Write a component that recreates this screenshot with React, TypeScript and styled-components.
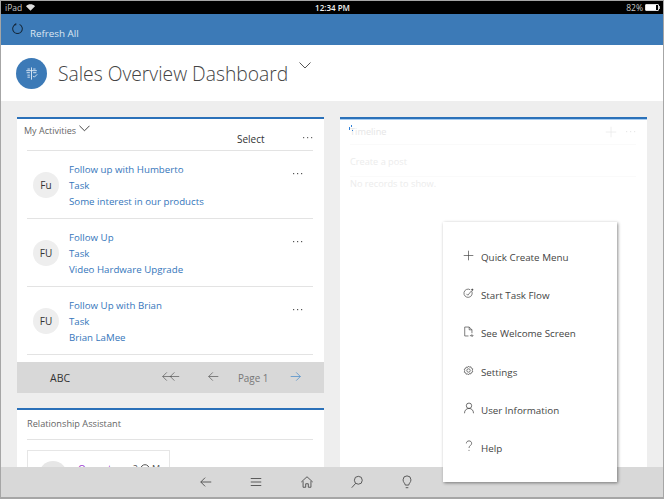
import { ReactNode } from 'react';
import styled, { createGlobalStyle } from 'styled-components';

const GlobalStyle = createGlobalStyle`
  html, body {
    margin: 0;
    padding: 0;
    background: #fff;
  }
  body {
    font-family: "Open Sans", "Liberation Sans", sans-serif;
  }
`;

const activities = [
  { initials: 'Fu', title: 'Follow up with Humberto', regarding: 'Some interest in our products' },
  { initials: 'FU', title: 'Follow Up', regarding: 'Video Hardware Upgrade' },
  { initials: 'FU', title: 'Follow Up with Brian', regarding: 'Brian LaMee' },
];

const Stroke = ({ children, size = 14, width = 16 }: { children: ReactNode; size?: number; width?: number }) => (
  <svg width={(size * width) / 16} height={size} viewBox={`0 0 ${width} 16`} fill="none" stroke="currentColor" strokeWidth="1">
    {children}
  </svg>
);

const Dots = () => (
  <svg width="10" height="3" viewBox="0 0 10 3" fill="currentColor">
    <rect x="0" y="1" width="1.2" height="1.2" />
    <rect x="4" y="1" width="1.2" height="1.2" />
    <rect x="8" y="1" width="1.2" height="1.2" />
  </svg>
);

const menuItems: { label: string; icon: ReactNode }[] = [
  { label: 'Quick Create Menu', icon: <Stroke size={11}><path d="M8 1v14M1 8h14" /></Stroke> },
  {
    label: 'Start Task Flow',
    icon: (
      <Stroke size={11}>
        <path d="M12.500 4.500a6 6 0 1 1-2-2" />
        <path d="M5 8.500l2 2 5-6" />
        <circle cx="13.500" cy="2.500" r="1" fill="currentColor" />
      </Stroke>
    ),
  },
  {
    label: 'See Welcome Screen',
    icon: (
      <Stroke size={11}>
        <path d="M8 14.500H2.500v-13H9l4 4v5M9 1.500v4h4" />
        <path d="M10 14h4M12.500 12l2 2-2 2" />
      </Stroke>
    ),
  },
  {
    label: 'Settings',
    icon: (
      <Stroke size={11}>
        <path d="M8 1.500l1.400 1.700 2.100-.6.6 2.100 2.100.8-.7 2.500.7 2.100-2.100.8-.6 2.100-2.100-.6L8 14.500l-1.400-1.700-2.100.6-.6-2.100-2.100-.8.7-2.500-.7-2.100 2.100-.8.6-2.100 2.100.6z" />
        <circle cx="8" cy="8" r="2.500" />
      </Stroke>
    ),
  },
  {
    label: 'User Information',
    icon: (
      <Stroke size={12}>
        <circle cx="8" cy="5" r="3.600" />
        <path d="M2 15c0-4 2.500-6.400 6-6.400s6 2.400 6 6.400" />
      </Stroke>
    ),
  },
  {
    label: 'Help',
    icon: (
      <Stroke size={12}>
        <path d="M4.500 4.500C4.500 2.500 6 1.200 8 1.200s3.500 1.300 3.500 3.200c0 3-3.500 3-3.500 6.200M8 13.200v1.300" />
      </Stroke>
    ),
  },
];

const App = () => (
  <>
    <GlobalStyle />
    <Frame>
      <StatusBar>
        <StatusSide>
          iPad
          <svg width="9" height="7" viewBox="0 0 11 8" fill="#ddd">
            <path d="M5.500 8L0 2.400C3 -.6 8 -.6 11 2.400z" />
          </svg>
        </StatusSide>
        <Clock>12:34 PM</Clock>
        <BatterySide>
          82%
          <Battery>
            <BatteryFill />
          </Battery>
          <BatteryNub />
        </BatterySide>
      </StatusBar>

      <CommandBar>
        <RefreshIcon width="11" height="11" viewBox="0 0 16 16" fill="none" stroke="currentColor" strokeWidth="1.500">
          <path d="M5 2a7 7 0 1 0 6 0" />
          <path d="M5.500 .2v2.500H3" />
        </RefreshIcon>
        <CommandLabel>Refresh All</CommandLabel>
      </CommandBar>

      <PageHeader>
        <EntityBadge>
          <svg width="13" height="13" viewBox="0 0 16 16" fill="none" stroke="#e4eef7" strokeWidth="1.100">
            <path d="M8 .5v15" />
            <path d="M1.500 4.500h13M3 2.500h3M10 2.500h3M2 7h4M10 7h4M3 10h3M3 12.500h3" />
            <path d="M10 11l1.500 1.500L15 9" />
          </svg>
        </EntityBadge>
        <PageTitle>Sales Overview Dashboard</PageTitle>
        <TitleChevron width="12" height="7" viewBox="0 0 12 7" fill="none" stroke="#555" strokeWidth="1">
          <path d="M.5 .5L6 6l5.500-5.500" />
        </TitleChevron>
      </PageHeader>

      <Workspace>
        <Column>
          <Card>
            <CardHead>
              <ViewName>
                My Activities
                <svg width="11" height="7" viewBox="0 0 12 7" fill="none" stroke="#333" strokeWidth="1">
                  <path d="M.5 .5L6 6l5.500-5.500" />
                </svg>
              </ViewName>
              <SelectLabel>Select</SelectLabel>
              <HeadMore>
                <Dots />
              </HeadMore>
            </CardHead>

            {activities.map((activity) => (
              <ActivityRow key={activity.title}>
                <Avatar>{activity.initials}</Avatar>
                <ActivityText>
                  <span>{activity.title}</span>
                  <span>Task</span>
                  <span>{activity.regarding}</span>
                </ActivityText>
                <RowMore>
                  <Dots />
                </RowMore>
              </ActivityRow>
            ))}

            <Pager>
              <Jump>ABC</Jump>
              <PagerIcon $left={0}>
                <Stroke size={11} width={26}>
                  <path d="M14 8H1M7 2L1 8l6 6M25 8H12M18 2l-6 6 6 6" />
                </Stroke>
              </PagerIcon>
              <PagerIcon $left={28}>
                <Stroke size={11}>
                  <path d="M15 8H1M7 2L1 8l6 6" />
                </Stroke>
              </PagerIcon>
              <PageLabel>Page 1</PageLabel>
              <PagerIcon $left={22} $active>
                <Stroke size={11}>
                  <path d="M1 8h14M9 2l6 6-6 6" />
                </Stroke>
              </PagerIcon>
            </Pager>
          </Card>

          <Card>
            <AssistantTitle>Relationship Assistant</AssistantTitle>
            <AssistantCard>
              <AssistantAvatar />
              <AssistantLink>Opportun</AssistantLink>
              <AssistantMeta>
                2
                <svg width="10" height="10" viewBox="0 0 10 10" fill="none" stroke="#555" strokeWidth="1">
                  <circle cx="5" cy="5" r="4.300" />
                </svg>
                M
              </AssistantMeta>
            </AssistantCard>
          </Card>
        </Column>

        <Column>
          <TimelineCard>
            <LoadingDots width="5" height="7" viewBox="0 0 5 7" fill="#2f80d8">
              <rect x="2" y="0" width="1" height="2" />
              <rect x="0" y="2" width="1" height="3" />
              <rect x="3" y="5" width="1" height="1" />
            </LoadingDots>
            <TimelineHead>
              <TimelineTitle>Timeline</TimelineTitle>
              <FadedAdd>
                <Stroke size={12}>
                  <path d="M8 1v14M1 8h14" />
                </Stroke>
              </FadedAdd>
              <Dots />
            </TimelineHead>
            <FadedLine>Create a post</FadedLine>
            <FadedText>No records to show.</FadedText>
          </TimelineCard>
        </Column>
      </Workspace>

      <BottomBar>
        <NavIcon>
          <Stroke>
            <path d="M14 8H2M7 3L2 8l5 5" />
          </Stroke>
        </NavIcon>
        <NavIcon>
          <Stroke>
            <path d="M2 4h12M2 8h12M2 12h12" />
          </Stroke>
        </NavIcon>
        <NavIcon>
          <Stroke>
            <path d="M1.500 8L8 2l6.500 6M3.500 7v7h3v-4h3v4h3V7" />
          </Stroke>
        </NavIcon>
        <NavIcon>
          <Stroke>
            <circle cx="9.500" cy="6" r="4.500" />
            <path d="M6.500 9.500L2 14.500" />
          </Stroke>
        </NavIcon>
        <NavIcon>
          <Stroke>
            <path d="M6 11.500C6 9.500 3.500 8.500 3.500 5.500a4.500 4.500 0 0 1 9 0c0 3-2.500 4-2.500 6zM6.500 14.500h3" />
          </Stroke>
        </NavIcon>
      </BottomBar>

      <QuickMenu>
        {menuItems.map((item) => (
          <MenuItem key={item.label}>
            <MenuIcon>{item.icon}</MenuIcon>
            <span>{item.label}</span>
          </MenuItem>
        ))}
      </QuickMenu>
    </Frame>
  </>
);

const Frame = styled.div`
  position: relative;
  width: 664px;
  height: 499px;
  box-sizing: border-box;
  border: 1px solid #a6a6a6;
  border-bottom-width: 2px;
  display: flex;
  flex-direction: column;
  overflow: hidden;
`;

const StatusBar = styled.div`
  height: 13px;
  flex: none;
  padding: 0 3px 0 4px;
  background: #000;
  color: #c8c8c8;
  font-size: 8.500px;
  line-height: 13px;
  display: grid;
  grid-template-columns: 1fr auto 1fr;
  align-items: center;
`;

const StatusSide = styled.div`
  display: flex;
  align-items: center;
  gap: 4px;
`;

const Clock = styled.div`
  color: #f2f2f2;
  font-size: 8px;
  font-weight: 600;
`;

const BatterySide = styled(StatusSide)`
  justify-content: flex-end;
  gap: 2px;
`;

const Battery = styled.div`
  width: 12px;
  height: 5px;
  border: 1px solid #ddd;
  border-radius: 1px;
`;

const BatteryFill = styled.div`
  width: 82%;
  height: 100%;
  background: #fff;
`;

const BatteryNub = styled.div`
  width: 1px;
  height: 3px;
  margin-left: -2px;
  background: #bbb;
`;

const CommandBar = styled.div`
  height: 31px;
  flex: none;
  background: #3c7ab7;
  display: flex;
  align-items: center;
  gap: 7px;
  padding-left: 11px;
`;

const RefreshIcon = styled.svg`
  color: #16293c;
  margin-top: -3px;
`;

const CommandLabel = styled.span`
  color: #dce8f3;
  font-size: 9.800px;
  position: relative;
  top: 4px;
`;

const PageHeader = styled.div`
  height: 56px;
  flex: none;
  background: #fff;
  display: flex;
  align-items: center;
  padding-left: 15px;
`;

const EntityBadge = styled.div`
  width: 31px;
  height: 31px;
  border-radius: 50%;
  background: #3c7ab7;
  display: flex;
  align-items: center;
  justify-content: center;
`;

const PageTitle = styled.h1`
  margin: 0 0 0 11px;
  font-size: 19.300px;
  font-weight: 300;
  color: #444;
`;

const TitleChevron = styled.svg`
  margin: -15px 0 0 11px;
`;

const Workspace = styled.div`
  flex: 1;
  min-height: 0;
  background: #eee;
  padding: 16px 16px 0;
  display: grid;
  grid-template-columns: 307px 307px;
  column-gap: 16px;
  overflow: hidden;
`;

const Column = styled.div`
  display: flex;
  flex-direction: column;
  gap: 15px;
`;

const Card = styled.section`
  position: relative;
  flex: none;
  background: #fff;
  border-top: 2px solid #2b71b9;
`;

const CardHead = styled.div`
  position: relative;
  height: 31px;
  margin: 0 11px 0 10px;
  border-bottom: 1px solid #e3e3e3;
`;

const ViewName = styled.div`
  margin-left: -3px;
  padding-top: 5px;
  display: flex;
  align-items: center;
  gap: 3px;
  font-size: 9px;
  color: #666;

  svg {
    margin-top: -4px;
  }
`;

const SelectLabel = styled.span`
  position: absolute;
  left: 210px;
  top: 13px;
  font-size: 10px;
  color: #333;
`;

const HeadMore = styled.span`
  position: absolute;
  right: 0;
  top: 17px;
  display: flex;
  color: #666;
`;

const ActivityRow = styled.div`
  position: relative;
  height: 67px;
  margin: 0 11px 0 10px;
  border-bottom: 1px solid #e3e3e3;
  display: flex;
  align-items: center;
  gap: 10px;
  padding-left: 6px;
`;

const Avatar = styled.div`
  width: 26px;
  height: 26px;
  border-radius: 50%;
  background: #eee;
  color: #333;
  font-size: 10px;
  display: flex;
  align-items: center;
  justify-content: center;
`;

const ActivityText = styled.div`
  padding-top: 3px;
  display: flex;
  flex-direction: column;
  font-size: 9.700px;
  line-height: 15.700px;
  color: #3576bb;
`;

const RowMore = styled.span`
  position: absolute;
  right: 10px;
  top: 21px;
  display: flex;
  color: #555;
`;

const Pager = styled.div`
  height: 31px;
  margin-top: 7px;
  background: #d8d8d8;
  display: flex;
  align-items: center;
  padding-left: 33px;
`;

const Jump = styled.span`
  width: 112px;
  font-size: 10.500px;
  color: #333;
`;

const PagerIcon = styled.span<{ $left: number; $active?: boolean }>`
  margin-left: ${({ $left }) => $left}px;
  margin-top: -2px;
  display: flex;
  color: ${({ $active }) => ($active ? '#3f86c9' : '#555')};
`;

const PageLabel = styled.span`
  margin-left: 19px;
  font-size: 9.900px;
  color: #777;
`;

const AssistantTitle = styled.div`
  height: 29px;
  margin: 0 11px 0 10px;
  border-bottom: 1px solid #e3e3e3;
  font-size: 9.200px;
  line-height: 28px;
  color: #666;
`;

const AssistantCard = styled.div`
  position: relative;
  width: 141px;
  height: 60px;
  margin: 10px 0 0 10px;
  border: 1px solid #e6e6e6;
`;

const AssistantAvatar = styled.div`
  position: absolute;
  left: 11px;
  top: 10px;
  width: 28px;
  height: 28px;
  border-radius: 50%;
  background: #e6e6e6;
`;

const AssistantLink = styled.span`
  position: absolute;
  left: 50px;
  top: 11px;
  font-size: 10px;
  color: #a040d0;
`;

const AssistantMeta = styled.span`
  position: absolute;
  right: 9px;
  top: 11px;
  display: flex;
  align-items: center;
  gap: 2px;
  font-size: 9px;
  color: #555;
`;

const TimelineCard = styled(Card)`
  height: 400px;
  box-shadow: inset 0 1px 0 #a9cdf0;
`;

const LoadingDots = styled.svg`
  position: absolute;
  left: 9px;
  top: 6px;
`;

const TimelineHead = styled.div`
  height: 25px;
  margin: 0 11px 0 10px;
  border-bottom: 1px solid #fafafa;
  display: flex;
  align-items: center;
  color: #e8e8e8;
`;

const TimelineTitle = styled.span`
  flex: 1;
  font-size: 9.200px;
  color: #e6e6e6;
`;

const FadedAdd = styled.span`
  display: flex;
  margin-right: 9px;
`;

const FadedLine = styled.div`
  height: 31px;
  margin: 0 11px 0 10px;
  border-bottom: 1px solid #fafafa;
  font-size: 9.200px;
  line-height: 33px;
  color: #ececec;
`;

const FadedText = styled(FadedLine)`
  border: none;
  line-height: 14px;
`;

const BottomBar = styled.nav`
  position: absolute;
  left: 0;
  right: 0;
  bottom: 0;
  height: 30px;
  background: #d8d8d8;
  display: grid;
  grid-template-columns: repeat(5, 14px);
  column-gap: 36.300px;
  padding-left: 198px;
  align-items: center;
`;

const NavIcon = styled.span`
  display: flex;
  color: #4a4a4a;
`;

const QuickMenu = styled.div`
  position: absolute;
  left: 442px;
  top: 221px;
  width: 174px;
  height: 260px;
  box-sizing: border-box;
  padding-top: 16.400px;
  background: #fff;
  box-shadow: 1px 1px 3px rgba(0, 0, 0, 0.45);
`;

const MenuItem = styled.div`
  height: 38.200px;
  display: flex;
  align-items: center;
  padding-left: 20px;
  font-size: 9.800px;
  color: #444;
`;

const MenuIcon = styled.span`
  width: 18px;
  display: flex;
  margin-top: -4px;
  color: #444;
`;

export default App;
